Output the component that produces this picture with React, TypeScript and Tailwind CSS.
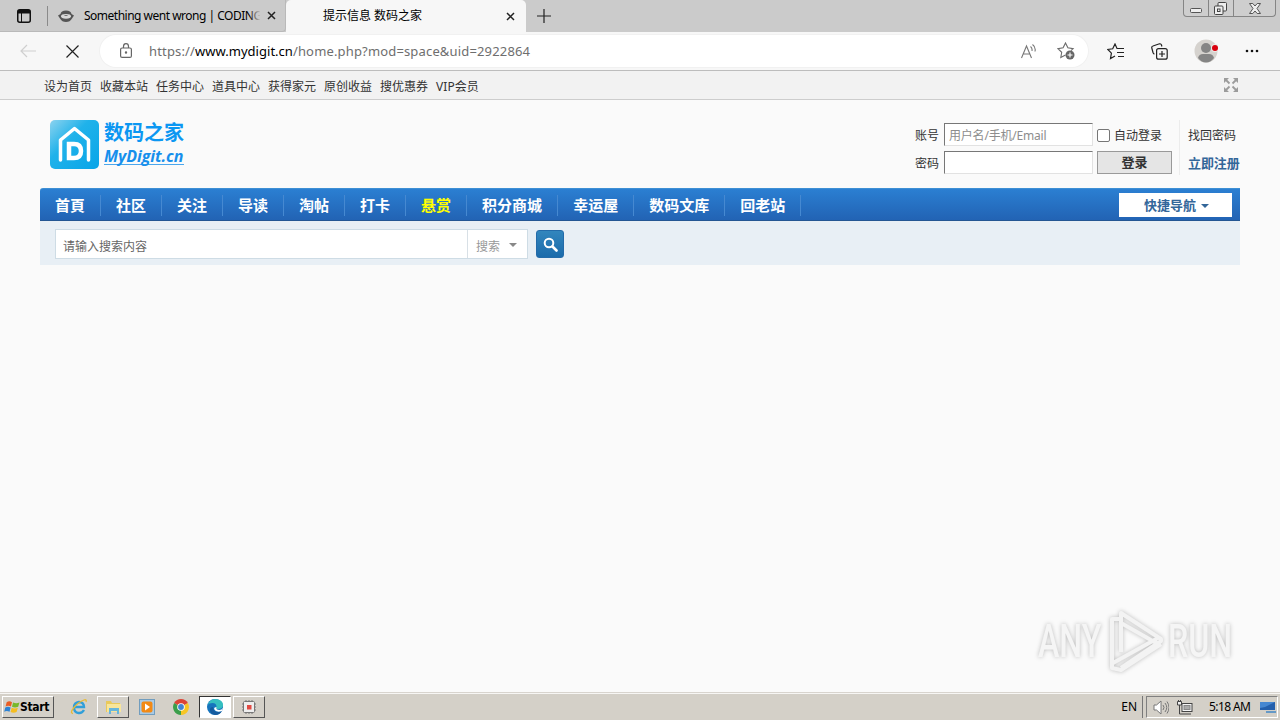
import React from "react";

const UTILITY_LINKS = ["设为首页", "收藏本站", "任务中心", "道具中心", "获得家元", "原创收益", "搜优惠券", "VIP会员"];

const NAV_ITEMS = ["首頁", "社区", "关注", "导读", "淘帖", "打卡", "悬赏", "积分商城", "幸运屋", "数码文库", "回老站"];

const CloseIcon = ({ className }: { className?: string }) => (
  <svg width="9" height="9" viewBox="0 0 9 9" className={className}>
    <path d="M1 1l7 7M8 1l-7 7" stroke="#222" strokeWidth="1.5" />
  </svg>
);

const WindowControls = () => (
  <div className="flex h-[17px] w-[93px] rounded-b-[4px] border border-t-0 border-[#858585] bg-[#cecece]">
    <div className="flex w-[25px] items-end justify-center border-r border-[#858585] pb-[3px]">
      <svg width="12" height="5" viewBox="0 0 12 5">
        <rect x=".5" y=".5" width="11" height="4" rx="1" fill="#eee" stroke="#555" />
      </svg>
    </div>
    <div className="flex w-[25px] items-center justify-center border-r border-[#858585] pr-px">
      <svg width="13" height="13" viewBox="0 0 13 13" fill="#eee" stroke="#444">
        <rect x="4" y=".5" width="8.5" height="8.5" rx="1" />
        <rect x=".5" y="4" width="8.5" height="8.5" rx="1" />
        <rect x="3.5" y="7" width="2.5" height="2.5" />
      </svg>
    </div>
    <div className="flex flex-1 items-center justify-center">
      <svg width="12" height="11" viewBox="0 0 12 11">
        <path
          d="M.5 .5h3.300L6 3l2.200-2.500h3.300L8 5.500l3.500 5H8.200L6 8l-2.200 2.500H.5L4 5.500z"
          fill="#eee"
          stroke="#555"
        />
      </svg>
    </div>
  </div>
);

const TabStrip = () => (
  <div className="flex h-8 bg-[#cbcbcb]">
    <div className="flex h-8 w-[286px] items-center rounded-br-[4px] border-r border-b border-[#b9b9b9]">
      <svg width="14" height="14" viewBox="0 0 14 14" className="ml-[17px]">
        <rect x=".75" y=".75" width="12.5" height="12.5" rx="2" fill="none" stroke="#111" strokeWidth="1.500" />
        <path d="M1 1h12v3.500H1z" fill="#111" />
        <path d="M4.500 4v9" stroke="#111" />
      </svg>
      <div className="ml-4 h-5 w-px bg-[#8a8a8a]" />
      <svg width="16" height="12" viewBox="0 0 16 12" className="ml-[10px]">
        <path d="M2.500 4Q3 .5 8 .5t5.500 3.500L16 5.500 14 8.500Q12 12 8 12T2 8.500L0 5.500z" fill="#555" />
        <ellipse cx="8" cy="6.300" rx="5" ry="2.400" fill="#d8d8d8" />
        <path d="M6.500 5.500h3" stroke="#777" />
      </svg>
      <div className="relative ml-[10px] w-[176px] whitespace-nowrap text-[12px] tracking-[-0.5px] text-black">
        Something went wrong | CODING
        <div className="absolute top-0 -right-1 h-full w-[14px] bg-linear-to-r from-[#cbcbcb]/10 to-[#cbcbcb] to-75%" />
      </div>
      <CloseIcon className="ml-[7px]" />
    </div>
    <div className="flex h-8 w-[240px] items-center rounded-t-[5px] bg-[#f7f7f7] pl-[37px]">
      <span className="w-[182px] text-[12px] text-black">提示信息 数码之家</span>
      <CloseIcon className="ml-px" />
    </div>
    <svg width="14" height="14" viewBox="0 0 14 14" className="mt-[9px] ml-[11px]">
      <path d="M7 0v14M0 7h14" stroke="#222" strokeWidth="1.200" />
    </svg>
    <div className="mr-[4px] ml-auto">
      <WindowControls />
    </div>
  </div>
);

const Toolbar = () => (
  <div className="flex h-[39px] items-center border-b border-[#bdbdbd] bg-[#f7f7f7]">
    <svg width="16" height="14" viewBox="0 0 16 14" className="ml-5" fill="none" stroke="#cfcfcf" strokeWidth="1.200">
      <path d="M16 7H1M7 1L1 7l6 6" />
    </svg>
    <svg width="13" height="13" viewBox="0 0 13 13" className="ml-[30px]">
      <path d="M.5 .5l12 12M12.500 .5l-12 12" stroke="#222" strokeWidth="1.200" />
    </svg>
    <div className="ml-[21px] flex h-8 w-[988px] items-center rounded-full bg-white ring-1 ring-[#f1f1f1]">
      <svg width="12" height="15" viewBox="0 0 12 15" className="-mt-px ml-5" fill="none" stroke="#666" strokeWidth="1.200">
        <rect x=".6" y="5" width="10.800" height="9.400" rx="1.500" />
        <path d="M3.500 5V3.500a2.500 2.800 0 015 0V5" />
        <circle cx="6" cy="9.500" r=".6" fill="#666" />
      </svg>
      <div className="mt-px ml-[17px] w-[390px] whitespace-nowrap font-['Noto_Sans'] text-[13px] tracking-[0.16px] text-[#6e6e6e]">
        https://<span className="tracking-[0.02px] text-black">www.mydigit.cn</span>/home.php?mod=space&amp;uid=2922864
      </div>
      <svg width="16" height="15" viewBox="0 0 16 15" className="mr-5 ml-auto" fill="none" stroke="#777" strokeWidth="1.100">
        <path d="M.5 14L5.500 2l5 12M2.300 10h6.500M9.500 2.500Q11.500 4 11 7M11.500 .5Q15 3 14 7.500" />
      </svg>
      <svg width="18" height="18" viewBox="0 0 18 18" className="mr-[13px]" fill="none" stroke="#6b6b6b" strokeWidth="1.100">
        <path d="M8.500 13l-4.700 2.500.9-5.200L.9 6.600l5.200-.8L8.500 1l2.400 4.800 5.200.8-2 2" />
        <circle cx="13" cy="13" r="4.500" fill="#666" stroke="none" />
        <path d="M13 10.500v5M10.500 13h5" stroke="#fff" />
      </svg>
    </div>
    <svg width="18" height="17" viewBox="0 0 18 17" className="ml-[19px]" fill="none" stroke="#222" strokeWidth="1.200">
      <path d="M11 5.500H10L8 1 5.700 5.800.8 6.500l3.600 3.700-.9 5.300L8 13M11 5.500h6M10 9.500h7M11 13.500h6" />
    </svg>
    <svg width="17" height="17" viewBox="0 0 17 17" className="ml-[26px]" fill="none" stroke="#222" strokeWidth="1.200">
      <rect x="5.600" y="5.600" width="10.600" height="10.600" rx="2" />
      <path d="M11 8v6M8 11h6M3.500 11Q2.500 11 2 9.500L.8 5Q.4 3.500 2 3l6.500-2.200q1.500-.3 2 1.200l.4 1.500" />
    </svg>
    <svg width="24" height="24" viewBox="0 0 24 24" className="ml-[26px]">
      <circle cx="12" cy="12" r="11.500" fill="#d5d2ce" />
      <circle cx="12" cy="9" r="5" fill="#858585" />
      <path d="M4 19q1-4 5-4h6q4 0 5 4-3.500 4.500-8 4.500T4 19z" fill="#858585" />
      <circle cx="21" cy="9" r="4" fill="#eceae8" />
      <circle cx="21" cy="9" r="3" fill="#d9000d" />
    </svg>
    <svg width="14" height="4" viewBox="0 0 14 4" className="ml-[27px]" fill="#111">
      <circle cx="2" cy="2" r="1.300" />
      <circle cx="7" cy="2" r="1.300" />
      <circle cx="12" cy="2" r="1.300" />
    </svg>
  </div>
);

const UtilityBar = () => (
  <div className="flex h-[29px] items-center border-b border-[#cdcdcd] bg-[#f2f2f2] pr-[42px] pl-[44px]">
    <div className="flex gap-2 pt-[3px] text-[12px] leading-4 whitespace-nowrap">
      {UTILITY_LINKS.map((link) => (
        <a key={link}>{link}</a>
      ))}
    </div>
    <svg width="14" height="14" viewBox="0 0 14 14" className="ml-auto" fill="#9c9c9c" stroke="#9c9c9c">
      <path d="M0 0h5L0 5zM14 0v5L9 0zM0 14V9l5 5zM14 14H9l5-5z" stroke="none" />
      <path d="M2 2l3.500 3.500M12 2L8.500 5.500M2 12l3.500-3.500M12 12L8.500 8.500" strokeWidth="1.800" />
    </svg>
  </div>
);

const Logo = () => (
  <div className="flex pt-[20px] pl-[10px]">
    <svg width="49" height="49" viewBox="0 0 49 49">
      <defs>
        <linearGradient id="logoFill" x1="0" y1="0" x2="1" y2="1">
          <stop offset="0" stopColor="#8cd3ef" />
          <stop offset=".4" stopColor="#20b2ea" />
          <stop offset="1" stopColor="#08a5e8" />
        </linearGradient>
      </defs>
      <rect width="49" height="49" rx="5" fill="url(#logoFill)" />
      <path d="M10.500 40V20L24.500 8.500 38.500 20v20" fill="none" stroke="#fff" strokeWidth="3.500" strokeLinecap="round" strokeLinejoin="round" />
      <path d="M19 24h5q7 0 7 7t-7 7h-5z" fill="none" stroke="#fff" strokeWidth="4.500" />
    </svg>
    <div className="ml-[5px] w-[80px] text-[#168fec]">
      <div className="h-[25px] whitespace-nowrap text-[20px] leading-[25px] font-bold text-[#0c97f2]">数码之家</div>
      <div className="h-[20px] border-b border-[#4aa6ed] font-['Open_Sans'] text-[16px] leading-[23px] font-bold tracking-[-0.05px] italic">
        MyDigit.cn
      </div>
    </div>
  </div>
);

const LoginForm = () => (
  <div className="flex pt-[20px] text-[12px] leading-6 whitespace-nowrap">
    <div className="flex flex-col gap-1 pt-[3px]">
      <div className="flex h-6">
        <label className="w-[29px] pt-px">账号</label>
        <input
          placeholder="用户名/手机/Email"
          className="h-[23px] w-[149px] rounded-none border border-t-[#777] border-r-[#e2e2e2] border-b-[#e2e2e2] border-l-[#777] bg-white px-1 pt-[2px] tracking-[-0.2px] placeholder:text-[#8d8d8d]"
        />
        <label className="ml-1 flex items-center">
          <input type="checkbox" className="mr-[4px] size-[13px] appearance-none rounded-[2px] border border-[#767676] bg-white" />
          <span className="pt-px">自动登录</span>
        </label>
      </div>
      <div className="flex h-6">
        <label className="w-[29px] pt-px">密码</label>
        <input
          type="password"
          className="h-[23px] w-[149px] rounded-none border border-t-[#777] border-r-[#e2e2e2] border-b-[#e2e2e2] border-l-[#777] bg-white px-1"
        />
        <button className="ml-1 h-[23px] w-[75px] border border-[#999] bg-[#e5e5e5] text-[13px] leading-[21px] font-bold">
          登录
        </button>
      </div>
    </div>
    <div className="ml-[7px] flex h-[55px] w-[61px] flex-col gap-1 border-l border-[#ececec] pt-[4px] pl-2">
      <a>找回密码</a>
      <a className="-mt-px text-[13px] font-bold tracking-[-0.1px] text-[#336699]">立即注册</a>
    </div>
  </div>
);

const NavBar = () => (
  <nav className="flex h-[33px] rounded-tl-[3px] border-t border-b border-t-[#3d8fd4] border-b-[#245693] bg-linear-to-b from-[#2b7fd2] to-[#2263b4] pl-px">
    {NAV_ITEMS.map((item) => (
      <a key={item} className="flex pl-[14px] text-[15px] leading-[32px] font-bold whitespace-nowrap text-white">
        <span className={item === "悬赏" ? "text-[#ffff00]" : ""}>{item}</span>
        <span className="mt-[6px] mr-px ml-[15px] h-[21px] w-px bg-[#4689d1]" />
      </a>
    ))}
    <div className="mt-1 mr-2 ml-auto flex h-6 w-[113px] items-center justify-center gap-[5px] bg-white pt-px pl-[2px] text-[13px] font-bold text-[#336699]">
      快捷导航
      <svg width="8" height="4" viewBox="0 0 8 4" fill="#336699">
        <path d="M0 0h8L4 4z" />
      </svg>
    </div>
  </nav>
);

const SearchBar = () => (
  <div className="flex h-11 bg-[#e8eff5] pt-2 pl-[15px]">
    <div className="flex h-[30px] w-[473px] border border-[#cedce5] bg-white text-[12px]">
      <div className="w-[411px] pt-1 pl-[7px] leading-[26px] text-[#666]">请输入搜索内容</div>
      <div className="flex flex-1 items-center border-l border-[#d8e0e6] pt-1 pl-[8px] text-[#999]">
        <span className="pt-px">搜索</span>
        <svg width="8" height="4" viewBox="0 0 8 4" className="-mt-[2px] ml-[9px]" fill="#888">
          <path d="M0 0h8L4 4z" />
        </svg>
      </div>
    </div>
    <button className="mt-px ml-2 flex size-7 items-center justify-center rounded-[3px] border border-[#236ba9] bg-linear-to-b from-[#3286bd] to-[#1b6bab]">
      <svg width="15" height="15" viewBox="0 0 15 15" fill="none" stroke="#fff">
        <circle cx="6" cy="6" r="4.300" strokeWidth="2" />
        <path d="M9.500 9.500l4 4" strokeWidth="2.600" strokeLinecap="round" />
      </svg>
    </button>
  </div>
);

const Watermark = () => (
  <div className="absolute right-[46px] bottom-[19px] flex h-[64px] items-center font-['Roboto'] text-[46px] font-medium text-[#f5f5f5] drop-shadow-[0_0_2px_#bbb]">
    <span className="w-[70px]">
      <span className="block origin-left scale-x-[0.7]">ANY</span>
    </span>
    <svg width="57" height="63" viewBox="0 0 57 63" fill="none" stroke="#f3f3f3" strokeWidth="4" strokeLinejoin="round">
      <path d="M13 42V3l40 26v2L13 58" />
      <path d="M11 9H4v49l9 2 40-26M13 13l37 21M5 53l45-25" />
    </svg>
    <span className="ml-[3px] w-[66px]">
      <span className="block origin-left scale-x-[0.7]">RUN</span>
    </span>
  </div>
);

interface TaskButtonProps {
  active?: boolean;
  raised?: boolean;
  children: React.ReactNode;
}

const TaskButton: React.FC<TaskButtonProps> = ({ active, raised, children }) => {
  const frame = active
    ? "border-t-[#333] border-l-[#333] border-b-white border-r-white bg-white"
    : raised
      ? "border-t-white border-l-white border-b-[#555] border-r-[#555]"
      : "border-transparent";
  return <div className={`flex h-[22px] w-8 items-center justify-center border ${frame}`}>{children}</div>;
};

const Taskbar = () => (
  <div className="flex h-[28px] items-center border-t border-[#d8d4ce] bg-[#d4d0c8] pt-px text-[12px] text-black shadow-[inset_0_1px_0_#f7f6f4]">
    <button className="ml-[2px] flex h-[22px] w-[52px] items-center border border-t-white border-r-[#555] border-b-[#555] border-l-white pl-px font-['DejaVu_Sans_Condensed'] text-[12px] font-bold tracking-[-0.35px]">
      <svg width="16" height="16" viewBox="0 0 15 15" className="shrink-0">
        <path d="M2.500 3Q5 1 7.500 3L6.500 7Q4 5.500 1.500 7z" fill="#e95d24" />
        <path d="M8.500 3.200q3 1.500 6 0l-1.200 4q-3 1.500-5.800 0z" fill="#78b82a" />
        <path d="M1.200 8q2.500-1.500 5 0l-1 4Q2.500 10.500.2 12z" fill="#2c82d4" />
        <path d="M7.200 8.200q3 1.500 5.800 0l-1.200 4q-3 1.500-5.600 0z" fill="#f5bd20" />
      </svg>
      Start
    </button>
    <div className="ml-[9px] flex gap-[2px]">
      <TaskButton>
        <svg width="18" height="18" viewBox="0 0 18 18" fill="none">
          <path d="M14 12q-2 3.500-5.500 3Q4 14.500 4 9.500T9 4q5 0 5 5H5" stroke="#319fd9" strokeWidth="2.400" />
          <path d="M3 15.500Q-.5 15 4 9.500T14 2q3-1 2 2" stroke="#e8ba35" strokeWidth="1.300" />
        </svg>
      </TaskButton>
      <TaskButton raised>
        <svg width="17" height="16" viewBox="0 0 17 16">
          <path d="M1 2h5l1 2h8v9H1z" fill="#e9c95b" />
          <path d="M2 5h14v8H2z" fill="#f8e59a" />
          <path d="M4 15V9h10v6h-2v-3H6v3z" fill="#67b6dc" />
        </svg>
      </TaskButton>
      <TaskButton>
        <svg width="16" height="16" viewBox="0 0 16 16">
          <rect x=".5" y=".5" width="15" height="15" fill="#a9cae5" stroke="#719dbe" />
          <rect x="2.500" y="2.500" width="11" height="11" rx="2" fill="#f28a16" />
          <path d="M6 4.500l5 3.500-5 3.500z" fill="#fff" />
        </svg>
      </TaskButton>
      <TaskButton>
        <svg width="16" height="16" viewBox="0 0 16 16">
          <path d="M8 8L1.100 4a8 8 0 0113.800 0z" fill="#dc4437" />
          <path d="M8 8l6.900-4A8 8 0 018 16z" fill="#f7c625" />
          <path d="M8 8v8A8 8 0 011.100 4z" fill="#3b9e4b" />
          <circle cx="8" cy="8" r="3.800" fill="#fff" />
          <circle cx="8" cy="8" r="2.900" fill="#4285d4" />
        </svg>
      </TaskButton>
      <TaskButton active>
        <svg width="16" height="16" viewBox="0 0 16 16">
          <circle cx="8" cy="8" r="8" fill="#1674bd" />
          <path d="M.5 6Q3 0 8 0q8 0 8 6.500Q15.500 10 11 10q-2.500 0-1.500-2 0-4-4-4Q2 4 .5 6z" fill="#35bfc0" />
          <path d="M6 8q0 5 5 5 2 0 4-1-2 4-7 4-5-1-5-5 0-3 3-3z" fill="#155b9e" />
          <path d="M9.500 8q-1 3 3 3 2 0 3.500-2l-1 3q-6 2-8-2 0-2 2.500-2z" fill="#fff" />
        </svg>
      </TaskButton>
      <TaskButton raised>
        <svg width="14" height="14" viewBox="0 0 14 14">
          <rect x="1.500" y="1.500" width="11" height="11" rx="1" fill="#eee" stroke="#777" />
          <path d="M0 4h1M0 7h1M0 10h1M13 4h1M13 7h1M13 10h1M4 0v1M7 0v1M10 0v1M4 13v1M7 13v1M10 13v1" stroke="#777" />
          <rect x="5" y="5" width="4.500" height="4.500" fill="#e24a43" />
        </svg>
      </TaskButton>
    </div>
    <span className="ml-auto">EN</span>
    <div className="ml-[5px] h-[22px] w-px bg-[#777]" />
    <div className="mr-[2px] ml-[3px] flex h-[22px] w-[132px] items-center border border-t-[#808080] border-r-white border-b-white border-l-[#808080] pl-[6px]">
      <svg width="16" height="15" viewBox="0 0 16 15" fill="none" stroke="#777">
        <path d="M1 5h2.500L8 1v13l-4.500-4H1z" fill="#fff" />
        <path d="M10 5q2 2.500 0 5M12 3q3.500 4.500 0 9M14 1.500q4 6 0 12" />
      </svg>
      <svg width="16" height="15" viewBox="0 0 16 15" className="ml-2" stroke="#444">
        <rect x="5" y="3.500" width="10" height="8" fill="#f4f4f4" />
        <rect x="7" y="5.500" width="6" height="4" fill="#aaa" stroke="#888" />
        <path d="M7 14h7M2.500 5v9H7" fill="none" />
        <path d="M.5 1.500h4V5h-4zM1.500 0v2M3.500 0v2" fill="#eee" />
      </svg>
      <span className="ml-4 w-[43px] whitespace-nowrap text-[12px] tracking-[-0.6px]">5:18 AM</span>
      <svg width="16" height="14" viewBox="0 0 16 14" className="ml-[8px]">
        <path d="M0 2h15v8H0z" fill="#245fac" />
        <path d="M0 2h15L5 7 0 8z" fill="#4687d1" />
        <path d="M6 12h10" stroke="#6599c7" strokeWidth="2" />
      </svg>
    </div>
  </div>
);

export default function App() {
  return (
    <div className="flex h-[720px] w-[1280px] flex-col overflow-hidden bg-[#fafafa] font-['Noto_Sans','Noto_Sans_CJK_SC',sans-serif] text-[#333]">
      <TabStrip />
      <Toolbar />
      <main className="relative flex-1">
        <UtilityBar />
        <div className="mx-10">
          <header className="flex h-[88px] justify-between">
            <Logo />
            <LoginForm />
          </header>
          <NavBar />
          <SearchBar />
        </div>
        <Watermark />
      </main>
      <Taskbar />
    </div>
  );
}
